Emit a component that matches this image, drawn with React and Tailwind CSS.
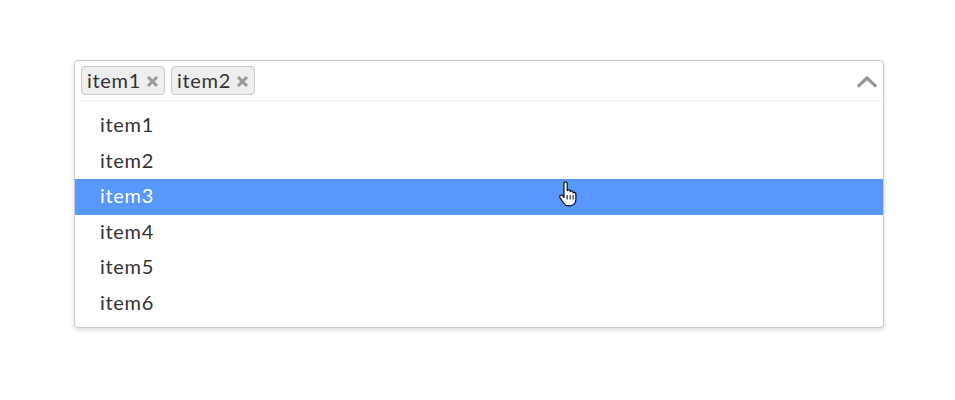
import React from "react"

const items = ["item1", "item2", "item3", "item4", "item5", "item6"]
const selected = ["item1", "item2"]

const Tag = ({ label }) => (
  <span className="flex items-center h-[29px] pl-[5px] pr-[5px] pb-[1px] bg-[#eeeeee] border border-[#cccccc] rounded-[4px] text-[#333333] text-[20px] tracking-[0.7px] leading-none">
    {label}
    <svg width="13" height="13" viewBox="0 0 13 13" className="ml-[5px] mt-[2px]">
      <path d="M2 2l9 9M11 2l-9 9" stroke="#999999" strokeWidth="3" strokeLinecap="butt" />
    </svg>
  </span>
)

const HandCursor = () => (
  <svg width="20" height="26" viewBox="0 0 20 26" className="absolute left-[558px] top-[181px]">
    <path
      d="M6 2.5c0-1 .7-1.7 1.6-1.7s1.6.7 1.6 1.7v7.2c.3-.6.9-.9 1.5-.9.9 0 1.5.6 1.5 1.5v.3c.3-.5.8-.8 1.4-.8.9 0 1.5.6 1.5 1.5v.6c.3-.4.8-.6 1.3-.6.9 0 1.5.7 1.5 1.6v5.5c0 3.6-2.6 6.4-6 6.4h-1.5c-2.2 0-3.7-1-4.9-2.8L2 16.6c-.5-.8-.3-1.8.5-2.3.7-.4 1.6-.2 2.1.4L6 16.3V2.5z"
      fill="#ffffff"
      stroke="#111111"
      strokeWidth="1.2"
      strokeLinejoin="round"
    />
    <path d="M9.2 14v4.5M12.2 14v4.5M15.1 14v4.5" stroke="#111111" strokeWidth="1" />
  </svg>
)

export default function App() {
  return (
    <div className="relative w-[955px] h-[400px] bg-white font-['Lato','Noto_Sans',sans-serif]">
      <div className="pt-[60px] pl-[74px] w-[884px]">
        <div className="border border-[#cccccc] rounded-[4px] shadow-[0_2px_4px_rgba(0,0,0,0.15)] bg-white">
          <div className="flex items-center h-[40px] pl-[6px] pr-[6px] border-b border-[#f2f2f2]">
            <div className="flex items-center gap-[6px] flex-1">
              {selected.map((s) => (
                <Tag key={s} label={s} />
              ))}
            </div>
            <svg width="20" height="14" viewBox="0 0 20 14">
              <path d="M2 11.5L10 4l8 7.5" fill="none" stroke="#999999" strokeWidth="3.2" strokeLinecap="square" />
            </svg>
          </div>
          <ul className="pt-[7px] pb-[6px]">
            {items.map((it) => (
              <li
                key={it}
                className={
                  it === "item3"
                    ? "h-[35.5px] flex items-center pl-[25px] pb-[3px] text-[20px] tracking-[0.7px] bg-[#5897fb] text-white"
                    : "h-[35.5px] flex items-center pl-[25px] pb-[3px] text-[20px] tracking-[0.7px] text-[#333333]"
                }
              >
                {it}
              </li>
            ))}
          </ul>
        </div>
      </div>
      <HandCursor />
    </div>
  )
}
